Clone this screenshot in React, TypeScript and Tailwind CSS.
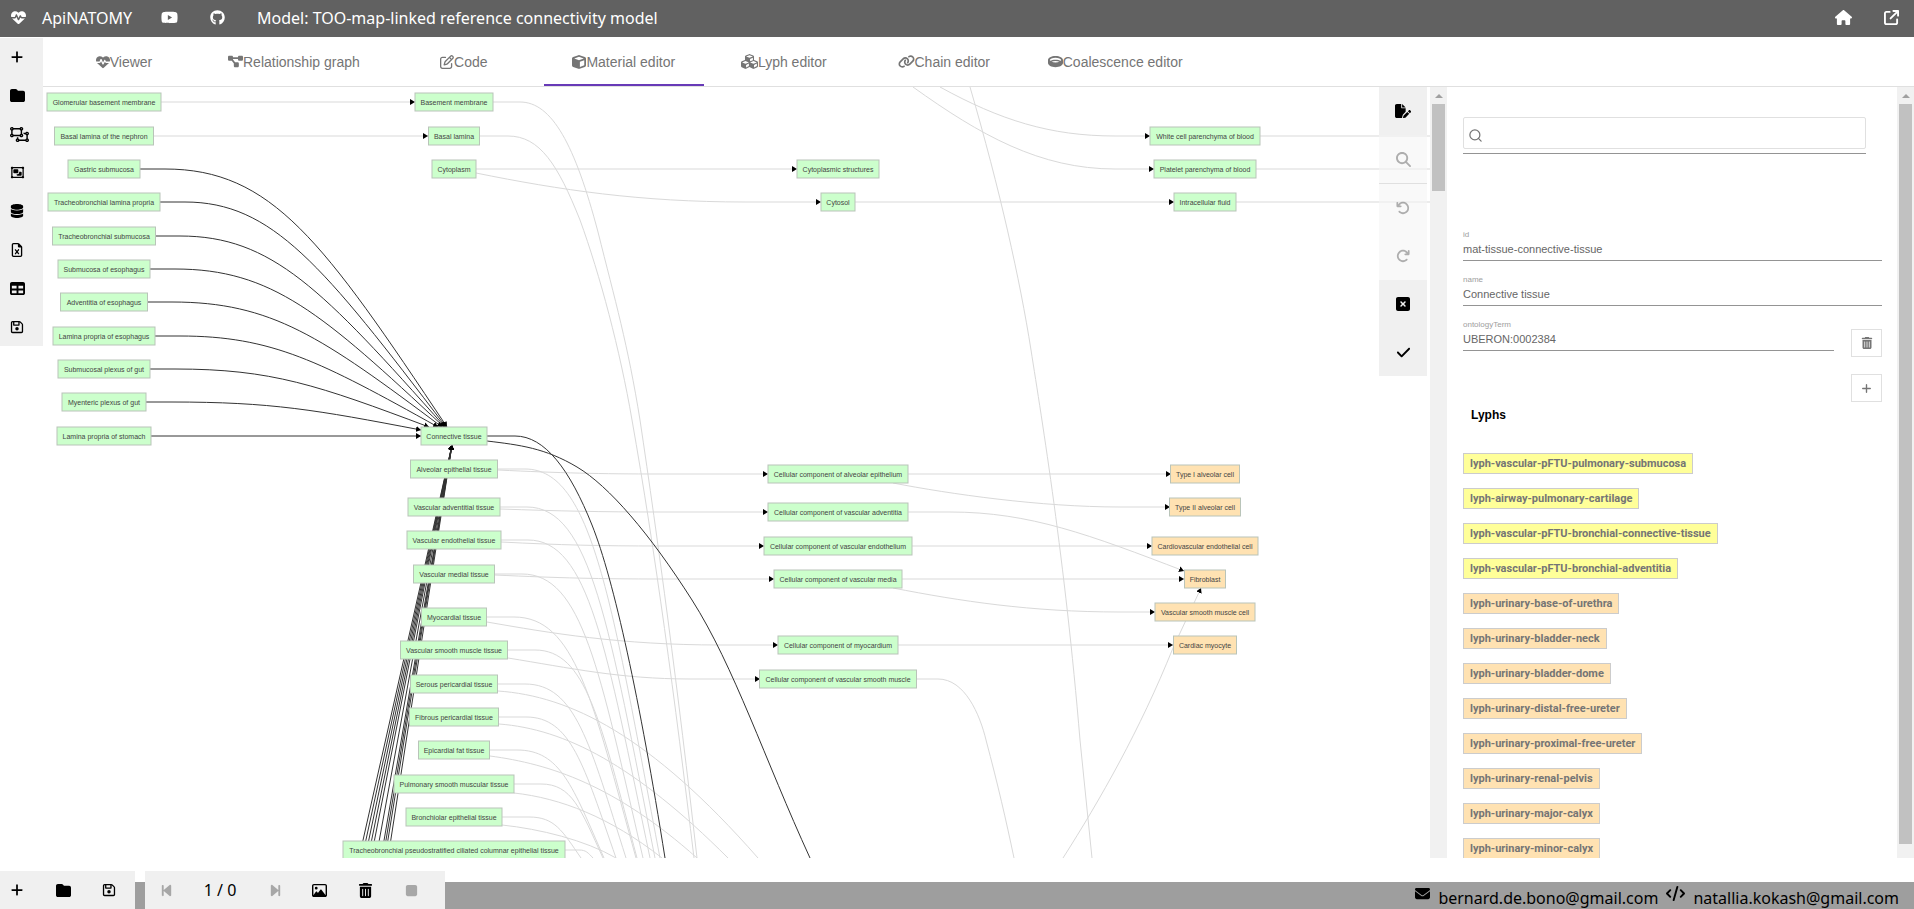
import React from 'react';
import {
  FaHeartPulse, FaYoutube, FaGithub, FaHouse, FaArrowUpRightFromSquare, FaPlus, FaFolder,
  FaRegObjectUngroup, FaRegObjectGroup, FaDatabase, FaRegFileExcel, FaTable, FaRegFloppyDisk,
  FaDiagramProject, FaRegPenToSquare, FaCube, FaLink, FaFilePen, FaMagnifyingGlass,
  FaArrowRotateLeft, FaArrowRotateRight, FaSquareXmark, FaCheck, FaTrashCan, FaBackwardStep,
  FaForwardStep, FaRegImage, FaStop, FaEnvelope, FaCode,
} from 'react-icons/fa6';
import { FaCubes, FaRing } from 'react-icons/fa';
import { Search } from 'lucide-react';
import type { IconType } from 'react-icons';

type Item = { label: string; icon: IconType; size?: number; disabled?: boolean };
type Node = [label: string, x: number, y: number, width: number];

const sideItems: Item[] = [
  { label: 'New model', icon: FaPlus },
  { label: 'Load model', icon: FaFolder, size: 15 },
  { label: 'Join model', icon: FaRegObjectUngroup, size: 19 },
  { label: 'Merge model', icon: FaRegObjectGroup, size: 15 },
  { label: 'Import model', icon: FaDatabase },
  { label: 'Import from Excel', icon: FaRegFileExcel },
  { label: 'Show spreadsheet', icon: FaTable, size: 15 },
  { label: 'Save model', icon: FaRegFloppyDisk },
];

const tabs: Item[] = [
  { label: 'Viewer', icon: FaHeartPulse },
  { label: 'Relationship graph', icon: FaDiagramProject, size: 15 },
  { label: 'Code', icon: FaRegPenToSquare },
  { label: 'Material editor', icon: FaCube },
  { label: 'Lyph editor', icon: FaCubes, size: 17 },
  { label: 'Chain editor', icon: FaLink, size: 17 },
  { label: 'Coalescence editor', icon: FaRing, size: 15 },
];

const tools: Item[] = [
  { label: 'Edit', icon: FaFilePen, size: 16 },
  { label: 'Find', icon: FaMagnifyingGlass, size: 15, disabled: true },
  { label: 'Undo', icon: FaArrowRotateLeft, disabled: true },
  { label: 'Redo', icon: FaArrowRotateRight, disabled: true },
  { label: 'Cancel', icon: FaSquareXmark, size: 16 },
  { label: 'Apply', icon: FaCheck, size: 15 },
];

const lyphs = [
  'lyph-vascular-pFTU-pulmonary-submucosa',
  'lyph-airway-pulmonary-cartilage',
  'lyph-vascular-pFTU-bronchial-connective-tissue',
  'lyph-vascular-pFTU-bronchial-adventitia',
  'lyph-urinary-base-of-urethra',
  'lyph-urinary-bladder-neck',
  'lyph-urinary-bladder-dome',
  'lyph-urinary-distal-free-ureter',
  'lyph-urinary-proximal-free-ureter',
  'lyph-urinary-renal-pelvis',
  'lyph-urinary-major-calyx',
  'lyph-urinary-minor-calyx',
];

const materials: Node[] = [
  ['Glomerular basement membrane', 104, 102, 114],
  ['Basal lamina of the nephron', 104, 136, 99],
  ['Gastric submucosa', 104, 169, 72],
  ['Tracheobronchial lamina propria', 104, 202, 112],
  ['Tracheobronchial submucosa', 104, 236, 103],
  ['Submucosa of esophagus', 104, 269, 92],
  ['Adventitia of esophagus', 104, 302, 87],
  ['Lamina propria of esophagus', 104, 336, 102],
  ['Submucosal plexus of gut', 104, 369, 92],
  ['Myenteric plexus of gut', 104, 402, 84],
  ['Lamina propria of stomach', 104, 436, 94],
  ['Basement membrane', 454, 102, 78],
  ['Basal lamina', 454, 136, 51],
  ['Cytoplasm', 454, 169, 44],
  ['Connective tissue', 454, 436, 66],
  ['Alveolar epithelial tissue', 454, 469, 87],
  ['Vascular adventitial tissue', 454, 507, 92],
  ['Vascular endothelial tissue', 454, 540, 94],
  ['Vascular medial tissue', 454, 574, 81],
  ['Myocardial tissue', 454, 617, 65],
  ['Vascular smooth muscle tissue', 454, 650, 107],
  ['Serous pericardial tissue', 454, 684, 87],
  ['Fibrous pericardial tissue', 454, 717, 89],
  ['Epicardial fat tissue', 454, 750, 71],
  ['Pulmonary smooth muscular tissue', 454, 784, 120],
  ['Bronchiolar epithelial tissue', 454, 817, 96],
  ['Tracheobronchial pseudostratified ciliated columnar epithelial tissue', 454, 850, 222],
  ['Cytoplasmic structures', 838, 169, 82],
  ['Cytosol', 838, 202, 34],
  ['Cellular component of alveolar epithelium', 838, 474, 140],
  ['Cellular component of vascular adventitia', 838, 512, 140],
  ['Cellular component of vascular endothelium', 838, 546, 148],
  ['Cellular component of vascular media', 838, 579, 128],
  ['Cellular component of myocardium', 838, 645, 120],
  ['Cellular component of vascular smooth muscle', 838, 679, 157],
  ['White cell parenchyma of blood', 1205, 136, 110],
  ['Platelet parenchyma of blood', 1205, 169, 102],
  ['Intracellular fluid', 1205, 202, 62],
];

const cells: Node[] = [
  ['Type I alveolar cell', 1205, 474, 69],
  ['Type II alveolar cell', 1205, 507, 71],
  ['Cardiovascular endothelial cell', 1205, 546, 106],
  ['Fibroblast', 1205, 579, 41],
  ['Vascular smooth muscle cell', 1205, 612, 100],
  ['Cardiac myocyte', 1205, 645, 63],
];

// edges that end in an arrow
const links = [
  'M161 102H415',
  'M153 136H428',
  'M476 169H797',
  'M476 173C560 190 640 202 745 202H821',
  'M855 202H1174',
  'M940 87C1000 120 1050 136 1115 136H1150',
  'M913 87C980 135 1040 169 1115 169H1154',
  'M498 470C560 473 600 474 660 474H768',
  'M500 509C560 511 600 512 660 512H768',
  'M501 542C560 545 600 546 660 546H764',
  'M495 575C560 578 600 579 660 579H774',
  'M487 622C550 633 620 645 720 645H778',
  'M508 658C570 668 620 679 690 679H760',
  'M907 474H1171',
  'M893 483C950 494 1040 507 1120 507H1170',
  'M907 512H950C1030 512 1090 535 1184 571',
  'M912 546H1152',
  'M901 579H1184',
  'M893 588C960 601 1030 612 1120 612H1155',
  'M898 645H1173',
  'M1063 858C1100 800 1140 730 1173 648L1201 588',
];

// edges that leave the visible area
const openLinks = [
  'M1260 136H1430',
  'M1256 169H1430',
  'M1236 202H1430',
  'M493 102H520C552 102 575 145 598 232C615 300 628 345 640 420C658 540 678 690 697 858',
  'M480 136H508C540 136 558 165 580 220C600 275 620 350 632 420C655 550 675 700 694 858',
  'M970 87C1000 190 1020 280 1031 350S1065 560 1080 740L1092 858',
  'M915 679H938C965 679 980 715 986 740C998 785 1006 820 1014 858',
  'M498 691C570 696 650 735 758 858',
  'M499 724C565 729 635 765 728 858',
  'M490 756C550 764 615 785 697 858',
  'M514 793C560 798 610 817 662 858',
  'M502 825C540 829 585 840 616 858',
];

// [start x, y, x at the bottom edge]
const falling = [
  [498, 469, 660], [500, 507, 655], [501, 540, 650], [495, 574, 643], [487, 617, 636], [508, 650, 637],
  [498, 684, 626], [499, 717, 616], [490, 750, 604], [514, 784, 603], [502, 817, 581], [565, 850, 593],
];

// [start x, y, end x, end y]
const incoming = [
  [140, 169, 447, 427], [160, 202, 446, 427], [155, 236, 445, 427], [150, 269, 444, 427], [147, 302, 442, 427],
  [155, 336, 438, 427], [150, 369, 429, 427], [146, 402, 421, 430],
];

const bundle = [359, 362, 365, 368, 371, 376, 381, 383, 385, 388];

function fallPath([x, y, end]: number[]) {
  const turn = x + (y > 840 ? 14 : 27);
  const dx = end - turn;
  return `M${x} ${y}H${turn}C${turn + dx * 0.5} ${y} ${end - dx * 0.36} ${858 - (858 - y) * 0.66} ${end} 858`;
}

function incomingPath([x, y, ex, ey]: number[]) {
  return `M${x} ${y}H${x + 25}C272 ${y} ${270 + (ex - 270) * 0.3} ${y + (ey - y) * 0.28} ${ex} ${ey}`;
}

function GraphNode({ node, fill }: { node: Node; fill: string }) {
  const [label, x, y, width] = node;
  return (
    <g>
      <rect x={x - width / 2} y={y - 9} width={width} height={18} fill={fill} stroke="#b9c4b9" />
      <text x={x} y={y + 3} textAnchor="middle" fontSize={7} fill="#444">{label}</text>
    </g>
  );
}

function Graph() {
  return (
    <svg className="block h-[771px] w-[1387px]" viewBox="43 87 1387 771" fontFamily="'Liberation Sans', Arial, sans-serif">
      <defs>
        <marker id="arrow" markerUnits="userSpaceOnUse" markerWidth="6" markerHeight="6" refX="5" refY="3" orient="auto">
          <path d="M0 0L5 3L0 6Z" fill="#000" />
        </marker>
      </defs>
      <g fill="none" stroke="#d9d9d9">
        {openLinks.map(d => <path key={d} d={d} />)}
        {falling.map(f => <path key={f[1]} d={fallPath(f)} />)}
        {links.map(d => <path key={d} d={d} markerEnd="url(#arrow)" />)}
      </g>
      <g fill="none" stroke="#333">
        {incoming.map(i => <path key={i[1]} d={incomingPath(i)} markerEnd="url(#arrow)" />)}
        <path d="M151 436H421" markerEnd="url(#arrow)" />
        {bundle.map(x => <path key={x} d={`M${x} 858L452 445`} markerEnd="url(#arrow)" />)}
        <path d="M487 436H515C545 436 570 470 592 525C614 580 640 700 665 858" />
        <path d="M487 441C520 445 545 448 577 467C609 486 650 534 692 600C734 666 765 760 810 858" />
      </g>
      {materials.map(node => <GraphNode key={node[0]} node={node} fill="#ccffcc" />)}
      {cells.map(node => <GraphNode key={node[0]} node={node} fill="#ffe2b2" />)}
    </svg>
  );
}

function Header() {
  return (
    <header className="flex h-[37px] shrink-0 items-center bg-[#616161] pb-0.5 pl-[11px] pr-[15px] font-['Noto_Sans',sans-serif] text-base text-white">
      <FaHeartPulse size={15} />
      <h1 className="ml-4 w-[103px] whitespace-nowrap">ApiNATOMY</h1>
      <a href="#youtube" aria-label="YouTube" className="ml-4"><FaYoutube size={17} /></a>
      <a href="#github" aria-label="GitHub" className="ml-8"><FaGithub size={15} /></a>
      <span className="ml-8 flex-1">Model: TOO-map-linked reference connectivity model</span>
      <a href="#home" aria-label="Home"><FaHouse size={17} /></a>
      <a href="#open" aria-label="Open in new window" className="ml-8"><FaArrowUpRightFromSquare size={15} /></a>
    </header>
  );
}

function Sidebar() {
  return (
    <nav className="mt-px flex h-77 w-[43px] shrink-0 flex-col bg-[#f0f0f0]">
      {sideItems.map(({ label, icon: Icon, size = 14 }) => (
        <button key={label} aria-label={label} className="flex flex-1 items-center pl-2.5">
          <Icon size={size} />
        </button>
      ))}
    </nav>
  );
}

function Tabs() {
  return (
    <div role="tablist" className="flex h-[50px] shrink-0 border-b border-[#e0e0e0] pl-px">
      {tabs.map(({ label, icon: Icon, size = 14 }) => (
        <button
          key={label}
          role="tab"
          aria-selected={label === 'Material editor'}
          className="flex min-w-40 items-center justify-center border-b-2 border-transparent px-6 pt-0.5 text-sm text-[#757575] aria-selected:border-[#673ab7]"
        >
          <Icon size={size} />
          {label}
        </button>
      ))}
    </div>
  );
}

function Toolbar() {
  return (
    <div className="absolute right-[3px] top-0 flex w-12 flex-col">
      {tools.map(({ label, icon: Icon, size = 14, disabled }) => (
        <button
          key={label}
          aria-label={label}
          disabled={disabled}
          className={`flex items-center justify-center ${label === 'Find' ? 'h-[49px] border-b border-[#e0e0e0]' : 'h-12'} ${disabled ? 'bg-[#f5f5f5]/60 text-black/30' : 'bg-[#f0f0f0]'}`}
        >
          <Icon size={size} />
        </button>
      ))}
    </div>
  );
}

function Scrollbar({ thumb }: { thumb: string }) {
  return (
    <div className="flex w-[17px] shrink-0 flex-col items-center bg-[#f1f1f1]">
      <svg className="h-[17px] w-2 shrink-0" viewBox="0 0 8 17"><path d="M0 11L4 7L8 11Z" fill="#a0a0a0" /></svg>
      <div className={`w-[13px] bg-[#c1c1c1] ${thumb}`} />
    </div>
  );
}

function Field({ label, value }: { label: string; value: string }) {
  return (
    <label className="flex h-[45px] flex-1 flex-col">
      <span className="text-[8px] leading-[12px] text-[#9e9e9e]">{label}</span>
      <input className="h-5 w-full border-b border-[#949494] pb-1 text-[11px] leading-[15px] text-[#666]" defaultValue={value} />
    </label>
  );
}

function MaterialPanel() {
  return (
    <aside className="flex w-[467px] shrink-0">
      <div className="flex min-w-0 flex-1 flex-col overflow-hidden pl-4 pr-[15px] pt-[30px]">
        <div className="mr-4 border-b border-[#949494] pb-1">
          <label className="flex h-8 items-center gap-2 rounded-xs border border-[#e0e0e0] pl-1 pt-1 text-[#757575]">
            <Search size={15} />
            <input aria-label="Search" className="flex-1 text-[11px] outline-none" />
          </label>
        </div>
        <div className="mt-[75px]">
          <Field label="id" value="mat-tissue-connective-tissue" />
          <Field label="name" value="Connective tissue" />
          <div className="flex h-[45px] gap-[17px]">
            <Field label="ontologyTerm" value="UBERON:0002384" />
            <button aria-label="Delete" className="mt-2.5 flex h-7 w-[31px] items-center justify-center border border-[#e0e0e0] text-[#757575]">
              <FaTrashCan size={12} />
            </button>
          </div>
          <button aria-label="Add" className="ml-auto mt-2.5 flex h-7 w-[31px] items-center justify-center border border-[#e0e0e0] text-[#757575]">
            <FaPlus size={11} />
          </button>
        </div>
        <h2 className="ml-2 mt-[3px] text-xs font-bold leading-5">Lyphs</h2>
        <ul className="mt-7 flex flex-col gap-3.5">
          {lyphs.map((name, i) => (
            <li key={name} className={`h-[21px] shrink-0 self-start whitespace-nowrap border border-[#ccc] px-1.5 font-[Roboto,Arial,sans-serif] text-[11px] font-bold leading-[19px] text-[#757575] ${i < 4 ? 'bg-[#ffff99]' : 'bg-[#ffe2b2]'}`}>
              {name}
            </li>
          ))}
        </ul>
      </div>
      <Scrollbar thumb="h-[740px]" />
    </aside>
  );
}

function Footer() {
  return (
    <footer className="flex shrink-0 items-end font-['Noto_Sans',sans-serif] text-base">
      <div className="flex h-[38px] w-[135px] items-center justify-between bg-[#f0f0f0] pl-2.5 pr-[19px]">
        <button aria-label="Create"><FaPlus size={14} /></button>
        <button aria-label="Open"><FaFolder size={15} /></button>
        <button aria-label="Save"><FaRegFloppyDisk size={14} /></button>
      </div>
      <div className="h-[27px] w-2.5 bg-[#9e9e9e]" />
      <div className="flex h-[38px] items-center bg-[#f0f0f0] pr-3">
        <button aria-label="Previous" disabled className="flex w-[42px] justify-center text-black/30"><FaBackwardStep size={15} /></button>
        <span className="w-[66px] text-center">1 / 0</span>
        <button aria-label="Next" disabled className="flex w-11 justify-center text-black/30"><FaForwardStep size={15} /></button>
        <button aria-label="Snapshot" className="flex w-11 justify-center"><FaRegImage size={15} /></button>
        <button aria-label="Delete snapshot" className="flex w-12 justify-center"><FaTrashCan size={15} /></button>
        <button aria-label="Stop" disabled className="flex w-11 justify-center text-black/30"><FaStop size={15} /></button>
      </div>
      <div className="flex h-[27px] flex-1 items-center justify-end bg-[#9e9e9e] pr-[15px]">
        <FaEnvelope size={15} className="mb-1" />
        <a href="mailto:bernard.de.bono@gmail.com" className="ml-2 mt-1">bernard.de.bono@gmail.com</a>
        <FaCode size={19} className="mb-1 ml-2" />
        <a href="mailto:natallia.kokash@gmail.com" className="ml-2 mt-1">natallia.kokash@gmail.com</a>
      </div>
    </footer>
  );
}

export default function App() {
  return (
    <div className="flex h-screen w-full flex-col overflow-hidden bg-white font-['Liberation_Sans',Arial,sans-serif] text-black">
      <Header />
      <div className="flex min-h-0 flex-1">
        <Sidebar />
        <div className="mb-[13px] flex min-w-0 flex-1 flex-col">
          <Tabs />
          <div className="flex min-h-0 flex-1">
            <main className="relative min-w-0 flex-1 overflow-hidden">
              <Graph />
              <Toolbar />
            </main>
            <Scrollbar thumb="h-[87px]" />
            <MaterialPanel />
          </div>
        </div>
      </div>
      <Footer />
    </div>
  );
}
